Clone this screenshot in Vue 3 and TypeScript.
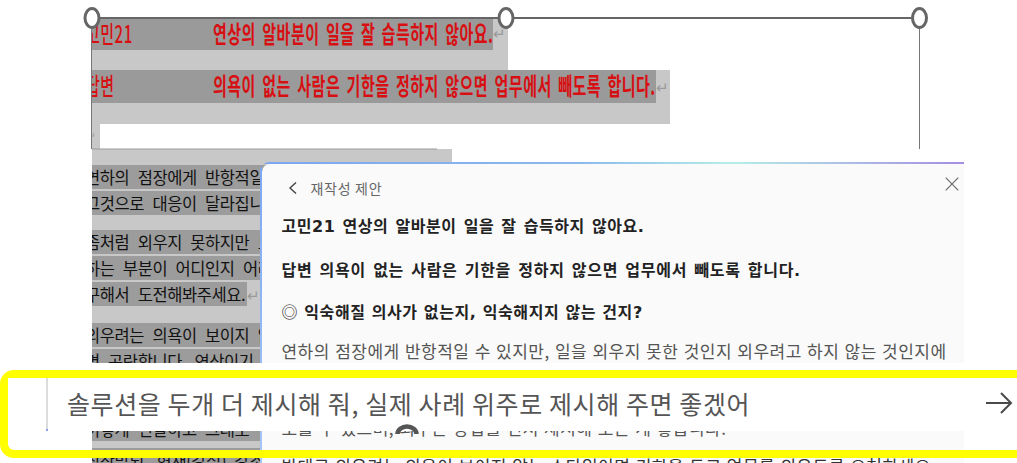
<script setup lang="ts">
interface DocLine {
  text: string
  cls?: string
  ret?: boolean
}
const docLines: DocLine[] = [
  { text: '연하의 점장에게 반항적일 수 있지만, 일을' },
  { text: '그것으로 대응이 달라집니다.', cls: 'para' },
  { text: '좀처럼 외우지 못하지만 노력하는' },
  { text: '하는 부분이 어디인지 어려운 부분' },
  { text: '구해서 도전해봐주세요.', cls: 'short para2', ret: true },
  { text: '외우려는 의욕이 보이지 않는다면' },
  { text: '면 곤란합니다. 연상이기 때문에' },
  { text: '말하기 어려울 수 있지만 분명하게', cls: 'para3' },
  { text: '이렇게 전달하고 그래도 변화가', cls: 'para4' },
  { text: '칭찬받되, 현재(강점) 강조해 주세요' }
]
</script>

<template>
  <div class="stage">
    <div class="doc">
      <div class="sel sel-a">
        <div class="mark mark-a">
          <span class="head">고민21</span><span class="squeeze">연상의 알바분이 일을 잘 습득하지 않아요.</span>
        </div>
        <span class="ret ret-a">↵</span>
      </div>
      <div class="sel sel-b">
        <div class="mark mark-b">
          <span class="head">답변</span><span class="squeeze">의욕이 없는 사람은 기한을 정하지 않으면 업무에서 빼도록 합니다.</span>
        </div>
        <span class="ret ret-b">↵</span>
      </div>
      <div class="blank"><span class="ret ret-c">↵</span></div>
      <div class="body">
        <div v-for="line in docLines" :key="line.text" class="line" :class="line.cls">
          <span class="clip">{{ line.text }}</span><span v-if="line.ret" class="ret ret-d">↵</span>
        </div>
      </div>
    </div>

    <svg class="frame-lines" width="1017" height="160" viewBox="0 0 1017 160" fill="none">
      <path d="M92 18H919" stroke="#666" stroke-width="2" />
      <path d="M91.5 18V149" stroke="#777" stroke-width="1" />
      <path d="M919.5 18V149" stroke="#777" stroke-width="1" />
      <path d="M92 149H437" stroke="#999" stroke-width="1" />
      <ellipse cx="92" cy="18" rx="7" ry="9.5" fill="#fff" stroke="#666" stroke-width="3" />
      <ellipse cx="506" cy="18" rx="7" ry="9.5" fill="#fff" stroke="#666" stroke-width="3" />
      <ellipse cx="919.5" cy="18" rx="7" ry="9.5" fill="#fff" stroke="#666" stroke-width="3" />
    </svg>

    <aside class="panel">
      <div class="panel-inner">
        <header class="panel-head">
          <svg class="back" width="12" height="14" viewBox="0 0 12 14" fill="none">
            <path d="M9 1.5L3 7L9 12.5" stroke="#444" stroke-width="1.4" />
          </svg>
          <span class="panel-title">재작성 제안</span>
          <svg class="close" width="14" height="14" viewBox="0 0 14 14" fill="none">
            <path d="M0.7 0.7L13.3 13.3M13.3 0.7L0.7 13.3" stroke="#666" stroke-width="1.1" />
          </svg>
        </header>
        <p class="strong s1">고민21 연상의 알바분이 일을 잘 습득하지 않아요.</p>
        <p class="strong s2">답변 의욕이 없는 사람은 기한을 정하지 않으면 업무에서 빼도록 합니다.</p>
        <p class="strong s3"><span class="bullseye">◎</span> 익숙해질 의사가 없는지, 익숙해지지 않는 건지?</p>
        <p class="txt">연하의 점장에게 반항적일 수 있지만, 일을 외우지 못한 것인지 외우려고 하지 않는 것인지에<br />대해 대응이 달라집니다.</p>
        <p class="txt t2">모를 수 있으며, 외우는 방법을 먼저 제시해 보는 게 좋습니다.</p>
        <p class="txt t3">반대로 외우려는 의욕이 보이지 않는 스타일이면 기한을 두고 업무를 외우도록 요청하세요.</p>
      </div>
    </aside>

    <div class="composer">
      <div class="frame">
        <div class="field">
          <span class="prompt">솔루션을 두개 더 제시해 줘, 실제 사례 위주로 제시해 주면 좋겠어</span>
          <svg class="send" width="28" height="24" viewBox="0 0 28 24" fill="none">
            <path d="M1 12H26M16 2L26 12L16 22" stroke="#4a4a4a" stroke-width="2" />
          </svg>
        </div>
        <svg class="spinner" width="24" height="10" viewBox="0 0 24 10" fill="none">
          <path d="M2.5 10A9.5 7.5 0 0 1 21.5 10" stroke="#555" stroke-width="4.5" />
        </svg>
      </div>
    </div>
  </div>
</template>

<style scoped>
.stage {
  position: relative;
  width: 1017px;
  height: 463px;
  overflow: hidden;
  background: #fff;
  padding: 18px 0 0 92px;
  box-sizing: border-box;
  font-family: "Noto Sans CJK KR", "Noto Sans", sans-serif;
}
.doc {
  width: 840px;
  overflow: hidden;
  height: 445px;
}
.sel {
  position: relative;
  background: #c8c8c8;
}
.sel-a {
  width: 416px;
  height: 52px;
}
.sel-b {
  width: 578px;
  height: 54px;
}
.mark {
  display: flex;
  align-items: center;
  background: #9a9a9a;
  color: #d80f12;
  font-weight: 700;
  font-size: 24px;
  letter-spacing: 0.8px;
  word-spacing: 4px;
  white-space: nowrap;
  overflow: hidden;
  padding-bottom: 4px;
  box-sizing: border-box;
}
.mark-a {
  width: 401px;
  height: 32px;
}
.mark-b {
  width: 564px;
  height: 33px;
}
.head {
  flex: none;
  width: 127px;
  margin-left: -6px;
  font-weight: 500;
  transform: scaleX(0.625);
  transform-origin: left center;
}
.squeeze {
  flex: none;
  transform: scaleX(0.625);
  transform-origin: left center;
}
.ret {
  color: #999;
  font-size: 15px;
  line-height: 1;
}
.ret-a {
  position: absolute;
  left: 401px;
  top: 7px;
}
.ret-b {
  position: absolute;
  left: 564px;
  top: 9px;
}
.blank {
  height: 25px;
  width: 8px;
  background: #c8c8c8;
  position: relative;
}
.ret-c {
  position: absolute;
  left: -4px;
  top: 7px;
  font-size: 9px;
}
.body {
  width: 360px;
  background: #c8c8c8;
  padding-top: 16px;
  height: 340px;
}
.line {
  height: 24px;
  line-height: 24px;
  margin-bottom: 2px;
  background: #9c9c9c;
  color: #111;
  font-size: 16.5px;
  white-space: nowrap;
  width: 180px;
  position: relative;
}
.clip {
  display: inline-block;
  margin-left: -7px;
  letter-spacing: -0.4px;
  word-spacing: 5px;
}
.para {
  margin-bottom: 15px;
}
.short {
  width: 155px;
}
.para2 {
  margin-bottom: 17px;
}
.para3 {
  margin-bottom: 18px;
}
.para4 {
  margin-bottom: 7px;
}
.ret-d {
  margin-left: 2px;
}
.frame-lines {
  position: absolute;
  left: 0;
  top: 0;
  pointer-events: none;
}
.panel {
  position: absolute;
  left: 260px;
  top: 162px;
  width: 704px;
  height: 320px;
  padding: 1.5px 0 0 1.5px;
  box-sizing: border-box;
  border-top-left-radius: 9px;
  background:
    linear-gradient(90deg, #7ba6f0 0%, #8cb8ec 45%, #b4eee8 67%, #a48de2 100%) top / 100% 2px no-repeat,
    linear-gradient(180deg, #7ba6f0, #a9c8f8) left / 2px 100% no-repeat;
}
.panel-inner {
  height: 100%;
  background: #fafafa;
  border-top-left-radius: 8px;
  padding: 0 20px;
  box-sizing: border-box;
  overflow: hidden;
}
.panel-head {
  display: flex;
  align-items: center;
  height: 49px;
  padding-left: 5px;
}
.back {
  flex: none;
}
.panel-title {
  margin-left: 12px;
  font-size: 14px;
  letter-spacing: 0.7px;
  color: #666;
}
.close {
  margin-left: auto;
  margin-top: -9px;
  margin-right: -15px;
  flex: none;
}
p {
  margin: 0;
  white-space: nowrap;
}
.strong {
  font-family: "DejaVu Sans", "Noto Sans CJK KR", sans-serif;
  font-size: 16px;
  font-weight: 700;
  letter-spacing: 0.7px;
  word-spacing: 1px;
  color: #222;
  line-height: 24px;
}
.s1 {
  margin-top: 2px;
  letter-spacing: 0.55px;
}
.s2 {
  margin-top: 20px;
}
.s3 {
  margin-top: 16px;
  letter-spacing: 0.6px;
  word-spacing: 0;
}
.bullseye {
  font-family: "Noto Sans CJK KR", sans-serif;
  font-weight: 400;
}
.txt {
  font-size: 17px;
  letter-spacing: 0.48px;
  word-spacing: 1px;
  color: #555;
  line-height: 22px;
  margin-top: 15px;
}
.t2 {
  margin-top: 33px;
}
.t3 {
  margin-top: 16px;
  color: #333;
}
.composer {
  position: absolute;
  left: 0;
  right: -14px;
  top: 363px;
  padding-top: 7px;
  background: linear-gradient(#fff 15px, transparent 15px);
}
.frame {
  position: relative;
  height: 72px;
  border: 8px solid #ffff00;
  border-radius: 14px;
  box-sizing: content-box;
}
.field {
  display: flex;
  align-items: center;
  height: 53px;
  background: #fff;
  padding: 0 0 4px 59px;
  box-sizing: border-box;
  position: relative;
}
.field::before {
  content: "";
  position: absolute;
  left: 38px;
  top: 0;
  bottom: 0;
  width: 1.5px;
  background: #dcdcdc;
  border-bottom: 2px solid #8aa0e8;
}
.prompt {
  font-size: 25px;
  letter-spacing: 0.6px;
  color: #555;
  white-space: nowrap;
}
.send {
  position: absolute;
  left: 977px;
  top: 13px;
}
.spinner {
  position: absolute;
  left: 387px;
  top: 46px;
}
</style>
